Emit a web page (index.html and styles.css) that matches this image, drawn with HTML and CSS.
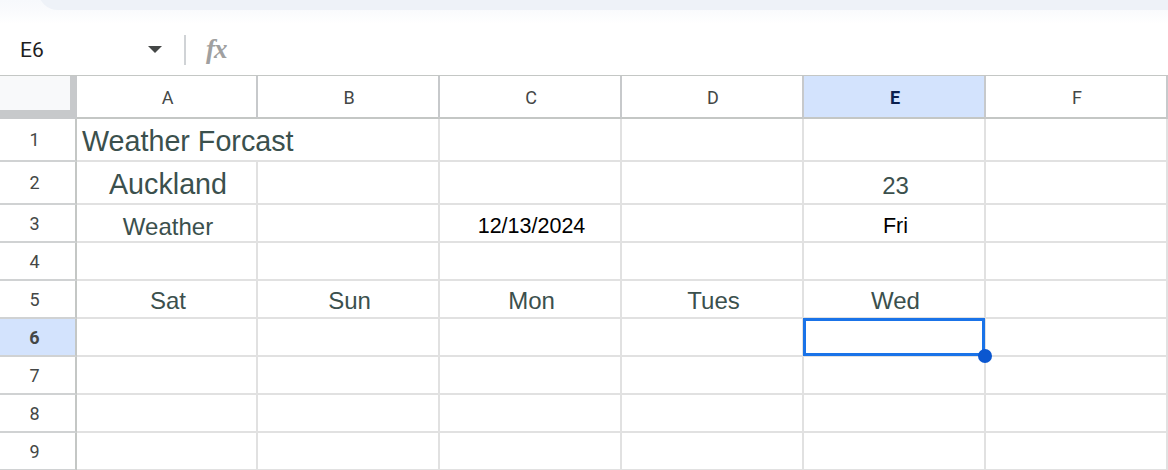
FILE: index.html
```html
<!DOCTYPE html>
<html>
<head>
<meta charset="utf-8">
<link rel="stylesheet" href="styles.css">
</head>
<body>
<div class="app">
  <div class="toolbar-wrap"><div class="toolbar"></div></div>
  <div class="formula-bar">
    <div class="name-box">
      <span class="name">E6</span>
      <svg class="caret" width="14" height="7" viewBox="0 0 14 7"><path d="M0 0 L14 0 L7 7 Z" fill="#444746"/></svg>
    </div>
    <div class="fb-sep"></div>
    <span class="fx">fx</span>
  </div>
  <div class="sheet">
    <div class="corner"></div>
    <div class="ch">A</div><div class="ch">B</div><div class="ch">C</div><div class="ch">D</div><div class="ch ch-sel">E</div><div class="ch">F</div>

    <div class="rh">1</div>
    <div class="c c-span2 left r-top"><span class="t-title">Weather Forcast</span></div>
    <div class="c"></div><div class="c"></div><div class="c"></div><div class="c"></div>

    <div class="rh">2</div>
    <div class="c r-top"><span class="t-title">Auckland</span></div>
    <div class="c"></div><div class="c"></div><div class="c"></div>
    <div class="c r-low"><span class="t-mid">23</span></div>
    <div class="c"></div>

    <div class="rh">3</div>
    <div class="c r-low"><span class="t-mid">Weather</span></div>
    <div class="c"></div>
    <div class="c r-low"><span class="t-date">12/13/2024</span></div>
    <div class="c"></div>
    <div class="c r-low"><span class="t-date">Fri</span></div>
    <div class="c"></div>

    <div class="rh">4</div>
    <div class="c"></div><div class="c"></div><div class="c"></div><div class="c"></div><div class="c"></div><div class="c"></div>

    <div class="rh">5</div>
    <div class="c r-mid"><span class="t-mid">Sat</span></div>
    <div class="c r-mid"><span class="t-mid">Sun</span></div>
    <div class="c r-mid"><span class="t-mid">Mon</span></div>
    <div class="c r-mid"><span class="t-mid">Tues</span></div>
    <div class="c r-mid"><span class="t-mid">Wed</span></div>
    <div class="c"></div>

    <div class="rh rh-sel">6</div>
    <div class="c"></div><div class="c"></div><div class="c"></div><div class="c"></div>
    <div class="c active"><div class="sel-box"></div><div class="sel-handle"></div></div>
    <div class="c"></div>

    <div class="rh">7</div>
    <div class="c"></div><div class="c"></div><div class="c"></div><div class="c"></div><div class="c"></div><div class="c"></div>

    <div class="rh">8</div>
    <div class="c"></div><div class="c"></div><div class="c"></div><div class="c"></div><div class="c"></div><div class="c"></div>

    <div class="rh">9</div>
    <div class="c"></div><div class="c"></div><div class="c"></div><div class="c"></div><div class="c"></div><div class="c"></div>
  </div>
</div>
</body>
</html>
```

FILE: styles.css
```css
* { box-sizing: border-box; }
html, body {
  margin: 0;
  padding: 0;
  background: #ffffff;
  overflow: hidden;
}
.app {
  width: 1168px;
  height: 470px;
  overflow: hidden;
  font-family: "Liberation Sans", Arial, sans-serif;
}
.toolbar-wrap {
  height: 24px;
  overflow: hidden;
  background: linear-gradient(to bottom, #f7f9fc 0px, #fafbfd 12px, #ffffff 24px);
}
.toolbar {
  margin-left: 38px;
  transform: translateY(-30px);
  height: 40px;
  border-radius: 20px 0 0 20px;
  background: #eef2f8;
}
.formula-bar {
  height: 52px;
  border-bottom: 1px solid #c4c7c5;
  display: flex;
  align-items: center;
}
.name-box {
  width: 184px;
  display: flex;
  align-items: center;
  padding-left: 20px;
  padding-right: 22px;
}
.name {
  font-family: Roboto, "Liberation Sans", sans-serif;
  font-size: 21px;
  color: #1f1f1f;
  flex: 1;
}
.caret {
  display: block;
}
.fb-sep {
  width: 2px;
  height: 30px;
  background: #d0d3d6;
}
.fx {
  margin-left: 20px;
  font-family: "Liberation Serif", "DejaVu Serif", serif;
  font-style: italic;
  font-weight: 700;
  font-size: 27px;
  color: #a0a0a0;
  letter-spacing: -1px;
}
.sheet {
  display: grid;
  grid-template-columns: 77px 181px 182px 182px 182px 182px 182px;
  grid-template-rows: 43px 43px 43px 38px 38px 38px 38px 38px 38px 38px;
}
.corner {
  background: #f8f9fa;
  border-right: 7px solid #c7c9cb;
  border-bottom: 9px solid #c7c9cb;
}
.ch {
  border-right: 2px solid #c7c9cb;
  border-bottom: 2px solid #c4c7c5;
  display: flex;
  align-items: center;
  justify-content: center;
  font-family: Roboto, "Liberation Sans", sans-serif;
  font-size: 18px;
  color: #444746;
  padding-top: 2px;
  padding-left: 2px;
}
.ch-sel, .rh-sel {
  background: #d3e3fd;
  color: #0b1f4d;
  font-weight: 700;
}
.rh {
  border-right: 2px solid #c4c7c5;
  border-bottom: 2px solid #d0d2d3;
  display: flex;
  align-items: center;
  justify-content: center;
  font-family: Roboto, "Liberation Sans", sans-serif;
  font-size: 18px;
  color: #444746;
  padding-right: 6px;
}
.c {
  border-right: 2px solid #e1e1e1;
  border-bottom: 2px solid #e1e1e1;
  display: flex;
  align-items: center;
  justify-content: center;
  white-space: nowrap;
  position: relative;
  padding-left: 3px;
}
.c-span2 {
  grid-column: span 2;
}
.left {
  justify-content: flex-start;
  padding-left: 5px;
}
.r-top {
  padding-top: 3px;
}
.r-mid {
  padding-top: 4px;
}
.r-low {
  padding-top: 7px;
}
.t-title {
  font-size: 28.7px;
  color: #3b504d;
}
.t-mid {
  font-size: 24px;
  color: #3b504d;
}
.t-date {
  font-size: 21.5px;
  color: #000000;
}
.active {
  z-index: 2;
}
.sel-box {
  position: absolute;
  left: -1px;
  top: -1px;
  right: -1px;
  bottom: -1px;
  border: 3px solid #1a73e8;
}
.sel-handle {
  position: absolute;
  right: -8px;
  bottom: -8px;
  width: 14px;
  height: 14px;
  border-radius: 50%;
  background: #0b57d0;
}
```
